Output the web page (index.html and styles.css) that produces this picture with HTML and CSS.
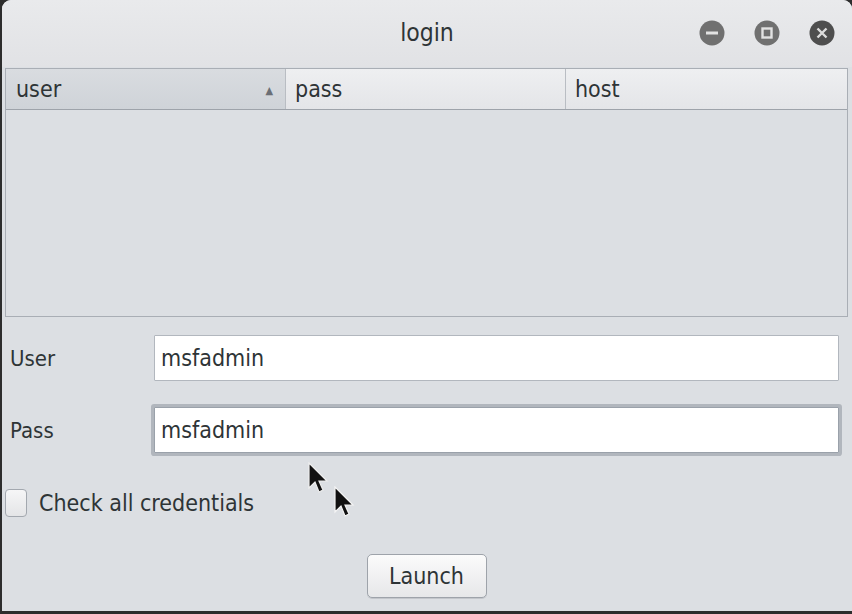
FILE: index.html
```html
<!DOCTYPE html>
<html>
<head>
<meta charset="utf-8">
<title>login</title>
<link rel="stylesheet" href="styles.css">
</head>
<body>
<div class="window">
  <header class="titlebar">
    <div class="spacer"></div>
    <div class="title">login</div>
    <div class="controls">
      <span class="wbtn">
        <svg width="26" height="26" viewBox="0 0 26 26"><circle cx="13" cy="13" r="12.5" fill="#707070"/><rect x="7" y="11.5" width="12" height="3" fill="#e2e2e2"/></svg>
      </span>
      <span class="wbtn">
        <svg width="26" height="26" viewBox="0 0 26 26"><circle cx="13" cy="13" r="12.5" fill="#707070"/><rect x="8.5" y="8.5" width="9" height="9" fill="none" stroke="#e2e2e2" stroke-width="2.4"/></svg>
      </span>
      <span class="wbtn">
        <svg width="26" height="26" viewBox="0 0 26 26"><circle cx="13" cy="13" r="12.5" fill="#4e4e4e"/><path d="M8.5 8.5 L17.5 17.5 M17.5 8.5 L8.5 17.5" stroke="#dcdcdc" stroke-width="2.4"/></svg>
      </span>
    </div>
  </header>

  <div class="table">
    <div class="thead">
      <div class="th sorted"><span>user</span><span class="arrow">▲</span></div>
      <div class="th"><span>pass</span></div>
      <div class="th last"><span>host</span></div>
    </div>
    <div class="tbody"></div>
  </div>

  <div class="form">
    <div class="row user-row">
      <label class="lbl">User</label>
      <div class="field"><input class="input" type="text" value="msfadmin"></div>
    </div>
    <div class="row pass-row">
      <label class="lbl">Pass</label>
      <div class="field focused"><input class="input" type="text" value="msfadmin"></div>
    </div>
    <div class="check-row">
      <span class="checkbox"></span>
      <span class="check-label">Check all credentials</span>
    </div>
    <div class="actions">
      <button class="btn">Launch</button>
    </div>
  </div>

  <svg class="cursor c1" width="22" height="34" viewBox="0 0 22 34"><path d="M1 1 L1 26 L7 20 L11 30 L15 28 L11 19 L19 19 Z" fill="#111" stroke="#eee" stroke-width="1.2"/></svg>
  <svg class="cursor c2" width="22" height="34" viewBox="0 0 22 34"><path d="M1 1 L1 26 L7 20 L11 30 L15 28 L11 19 L19 19 Z" fill="#111" stroke="#f4f4f4" stroke-width="1.2"/></svg>
</div>
</body>
</html>
```

FILE: styles.css
```css
html, body {
  margin: 0;
  padding: 0;
  background: #2d2d2d;
}
body {
  width: 852px;
  height: 614px;
  overflow: hidden;
  font-family: "DejaVu Sans Condensed", "DejaVu Sans", sans-serif;
  color: #2e3436;
}
.window {
  position: relative;
  margin-left: 2px;
  width: 850px;
  height: 611px;
  background: #dcdfe3;
  border-radius: 9px 9px 0 0;
  display: flex;
  flex-direction: column;
  overflow: hidden;
}
.titlebar {
  height: 67px;
  flex: none;
  display: grid;
  grid-template-columns: 1fr auto 1fr;
  align-items: center;
  background: linear-gradient(#e9eaec, #e1e2e5);
}
.title {
  font-size: 24.5px;
  color: #2e3436;
  padding-bottom: 2px;
}
.controls {
  display: flex;
  justify-content: flex-end;
  gap: 29px;
  padding-right: 17px;
  padding-bottom: 1px;
}
.wbtn {
  display: block;
  width: 26px;
  height: 26px;
}
.wbtn svg { display: block; }

.table {
  margin: 1px 4px 0 3px;
  height: 249px;
  box-sizing: border-box;
  border: 1px solid #a9aeb5;
  display: flex;
  flex-direction: column;
  flex: none;
}
.thead {
  display: grid;
  grid-template-columns: 280px 280px 1fr;
  height: 41px;
  box-sizing: border-box;
  border-bottom: 1px solid #9ea3aa;
  background: linear-gradient(#eeeff1, #e4e5e8);
}
.th {
  display: flex;
  align-items: center;
  justify-content: space-between;
  padding-left: 9px;
  padding-right: 12px;
  font-size: 23px;
  color: #2e3436;
  border-right: 1px solid #b9bdc3;
  box-sizing: border-box;
}
.th.last { border-right: none; }
.th.sorted {
  background: linear-gradient(#d9dce0, #cfd3d8);
  padding-left: 10px;
}
.arrow {
  font-size: 11px;
  color: #6b6f75;
  margin-top: 2px;
}
.tbody {
  flex: 1;
  background: #dcdfe3;
}

.form {
  display: flex;
  flex-direction: column;
}
.row {
  display: grid;
  grid-template-columns: 152px 1fr;
  align-items: center;
  padding-right: 13px;
}
.user-row { margin-top: 18px; }
.pass-row { margin-top: 26px; }
.lbl {
  padding-left: 8px;
  font-size: 22px;
  color: #2e3436;
}
.field {
  height: 46px;
  box-sizing: border-box;
  border: 1px solid #b2b7be;
  background: #fff;
  display: flex;
  border-radius: 1px;
}
.field.focused {
  border-color: #9aa1aa;
  box-shadow: 0 0 0 3px #b1b6bd;
}
.input {
  flex: 1;
  border: none;
  outline: none;
  background: transparent;
  font-family: "DejaVu Sans Condensed", "DejaVu Sans", sans-serif;
  font-size: 23px;
  color: #2e3436;
  padding: 0 0 0 6px;
  margin: 0;
}
.check-row {
  margin-top: 36px;
  display: flex;
  align-items: center;
  gap: 12px;
  padding-left: 3px;
}
.checkbox {
  width: 22px;
  height: 28px;
  box-sizing: border-box;
  border: 1px solid #a3a8af;
  border-radius: 4px;
  background: linear-gradient(#f6f6f7, #e4e5e7);
}
.check-label {
  font-size: 23px;
  color: #2e3436;
}
.actions {
  margin-top: 37px;
  display: flex;
  justify-content: center;
  padding-right: 1px;
}
.btn {
  width: 120px;
  height: 44px;
  box-sizing: border-box;
  border: 1px solid #9ea3aa;
  border-radius: 5px;
  background: linear-gradient(#fbfbfb, #e6e7e9);
  font-family: "DejaVu Sans Condensed", "DejaVu Sans", sans-serif;
  font-size: 23px;
  color: #2e3436;
  padding: 0;
  box-shadow: 0 1px 0 #c3c6cb;
}

.cursor {
  position: absolute;
  display: block;
}
.c1 { left: 306px; top: 462px; }
.c2 { left: 332px; top: 486px; }
```
